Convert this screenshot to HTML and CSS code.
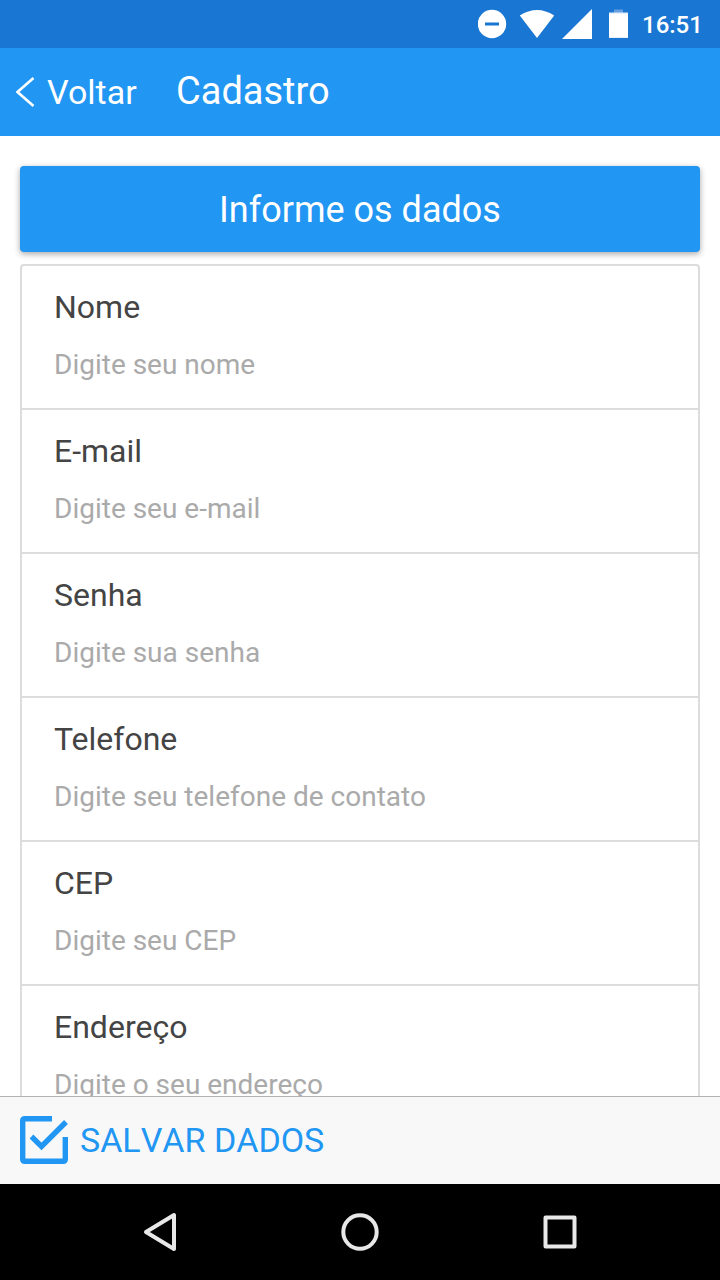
FILE: index.html
```html
<!DOCTYPE html>
<html lang="pt-BR">
<head>
<meta charset="utf-8">
<title>Cadastro</title>
<link rel="stylesheet" href="styles.css">
</head>
<body>
<div class="status-bar">
  <svg class="status-icons" width="152" height="48" viewBox="0 0 152 48">
    <circle cx="14" cy="24" r="14.200" fill="#fff"/>
    <rect x="7" y="22.500" width="14" height="3" fill="#1976d2"/>
    <path d="M41.800 15.500Q59 4.500 76.200 15.500L59 38Z" fill="#fff"/>
    <path d="M114 9V39H84Z" fill="#fff"/>
    <rect x="136" y="9.500" width="9" height="4" fill="#659fe0"/>
    <rect x="131" y="12.500" width="19" height="25.500" fill="#e8f1fb"/>
    <rect x="131" y="14" width="19" height="23" fill="#fff"/>
  </svg>
  <span class="clock">16:51</span>
</div>
<header class="header">
  <a class="back">
    <svg width="20" height="32" viewBox="0 0 20 32"><path d="M17.500 2L1.500 16L17.500 30" fill="none" stroke="#fff" stroke-width="2.600"/></svg>
    <span>Voltar</span>
  </a>
  <h1 class="title">Cadastro</h1>
</header>
<main class="content">
  <button class="banner">Informe os dados</button>
  <form class="card">
    <label class="field"><span class="label">Nome</span><span class="hint">Digite seu nome</span></label>
    <label class="field"><span class="label">E-mail</span><span class="hint">Digite seu e-mail</span></label>
    <label class="field"><span class="label">Senha</span><span class="hint">Digite sua senha</span></label>
    <label class="field"><span class="label">Telefone</span><span class="hint">Digite seu telefone de contato</span></label>
    <label class="field"><span class="label">CEP</span><span class="hint">Digite seu CEP</span></label>
    <label class="field"><span class="label">Endereço</span><span class="hint">Digite o seu endereço</span></label>
  </form>
</main>
<footer class="footer">
  <svg width="48" height="48" viewBox="0 0 48 48" fill="none" stroke="#2196f3" stroke-width="5.400">
    <path d="M32 2.700H5Q2.700 2.700 2.700 5V43Q2.700 45.300 5 45.300H43Q45.300 45.300 45.300 43V21"/>
    <path d="M11.500 20.500L21.500 30.500L46 6"/>
  </svg>
  <span>SALVAR DADOS</span>
</footer>
<nav class="nav">
  <svg width="40" height="40" viewBox="0 0 40 40"><path d="M34 3V37L6 20Z"/></svg>
  <svg width="40" height="40" viewBox="0 0 40 40"><circle cx="20" cy="20" r="16.700"/></svg>
  <svg width="40" height="40" viewBox="0 0 40 40"><rect x="5.500" y="5.500" width="29" height="29"/></svg>
</nav>
</body>
</html>
```
FILE: styles.css
```css
* { box-sizing: border-box; }
body {
  margin: 0;
  width: 720px;
  height: 1280px;
  display: flex;
  flex-direction: column;
  overflow: hidden;
  background: #fff;
  font-family: Roboto, sans-serif;
}
svg { display: block; flex: none; }
.status-bar {
  height: 48px;
  flex: none;
  display: flex;
  align-items: center;
  padding-left: 478px;
  background: #1976d2;
  color: #fff;
}
.clock {
  margin-left: 12px;
  padding-top: 2px;
  font-size: 24px;
  line-height: 28px;
  font-weight: 500;
}
.header {
  height: 88px;
  flex: none;
  display: flex;
  align-items: center;
  padding-left: 16px;
  background: #2196f3;
  color: #fff;
}
.back {
  display: flex;
  align-items: center;
  gap: 11px;
  width: 160px;
  font-size: 34px;
  line-height: 40px;
}
.title {
  margin: 0;
  padding-bottom: 2px;
  font-size: 38px;
  line-height: 44px;
  font-weight: 400;
}
.content {
  flex: 1;
  min-height: 0;
  overflow: hidden;
  padding: 30px 20px 0;
}
.banner {
  display: block;
  width: 100%;
  height: 86px;
  border: 0;
  border-radius: 4px;
  padding: 2px 0 0;
  background: #2196f3;
  color: #fff;
  font: 36px/44px Roboto, sans-serif;
  box-shadow: 0 2px 6px rgba(0, 0, 0, .35);
}
.card {
  margin-top: 12px;
  border: 2px solid #dcdcdc;
  border-radius: 4px;
}
.field {
  height: 144px;
  display: flex;
  flex-direction: column;
  gap: 20px;
  padding: 21px 32px 0;
  border-bottom: 2px solid #dcdcdc;
}
.label {
  font-size: 32px;
  line-height: 40px;
  color: #444;
}
.hint {
  font-size: 28px;
  line-height: 36px;
  color: #aaa;
}
.footer {
  height: 88px;
  flex: none;
  display: flex;
  align-items: center;
  gap: 12px;
  padding: 0 0 1px 20px;
  border-top: 1px solid #b2b2b2;
  background: #f8f8f8;
  color: #2196f3;
  font-size: 34px;
  line-height: 40px;
  font-kerning: none;
}
.nav {
  height: 96px;
  flex: none;
  display: flex;
  justify-content: space-between;
  align-items: center;
  padding: 0 140px;
  background: #000;
}
.nav svg {
  fill: none;
  stroke: #e8e8e8;
  stroke-width: 4;
  stroke-linejoin: round;
}
```
